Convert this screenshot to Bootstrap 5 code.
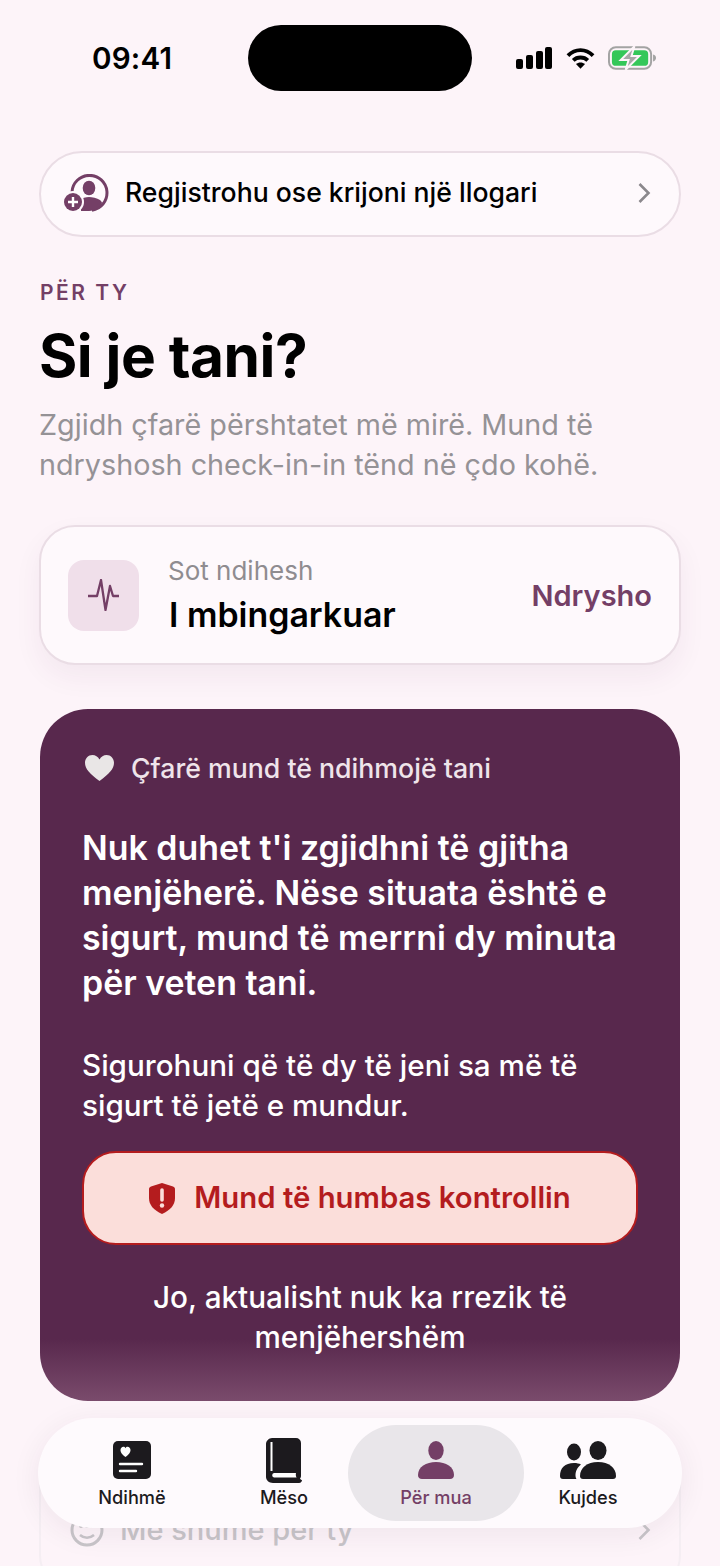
<!DOCTYPE html>
<html lang="en">
<head>
    <meta charset="UTF-8">
    <meta name="viewport" content="width=device-width, initial-scale=1.0">
    <title>Për mua</title>
    <link href="https://cdn.jsdelivr.net/npm/bootstrap@5.3.0/dist/css/bootstrap.min.css" rel="stylesheet">
    <style>
        html, body { height: 1566px; overflow: hidden; }
        body { background-color: #fdf4f9; font-family: Inter, "Liberation Sans", sans-serif; color: #000; position: relative; }
        .status-row { height: 91px; padding: 25px 63px 0 92px; }
        .clock { font-size: 29.6px; font-weight: 600; line-height: 66px; width: 156px; letter-spacing: .2px; }
        .island { width: 224px; height: 66px; background: #000; border-radius: 33px; }
        .status-icons { margin-left: auto; gap: 13.5px; height: 66px; }
        .page-body { padding: 60px 40px 0; }
        .signup-pill { height: 86px; margin: 0 -1px; border: 2px solid #eadde5; border-radius: 43px; background: #fef9fc; padding: 0 28px 2px 22px; }
        .signup-pill span { font-size: 26.6px; font-weight: 500; margin-left: 16px; }
        .eyebrow { font-size: 21px; font-weight: 600; letter-spacing: 2.5px; color: #743f66; margin-top: 43px; line-height: 26px; }
        .main-title { font-size: 58.6px; font-weight: 700; line-height: 70px; margin: 15px 0 0; letter-spacing: -.5px; margin-left: -1px; }
        .intro { font-size: 28.75px; line-height: 40px; color: #959296; margin: 14px 0 0 -1px; }
        .mood-card { height: 140px; margin: 40px -1px 0; border: 2px solid #eadde5; border-radius: 36px; background: #fef9fc; padding: 0 27px 0 27px; box-shadow: 0 12px 28px rgba(90, 40, 80, .06); }
        .mood-icon { width: 71px; height: 71px; border-radius: 16px; background: #f0dfea; margin-right: 29px; }
        .mood-text { padding-top: 2px; }
        .mood-small { font-size: 26px; line-height: 32px; color: #8f8c90; margin-top: -1px; }
        .mood-big { font-size: 33.9px; font-weight: 600; line-height: 42px; margin-top: 7px; padding-left: 1px; }
        .mood-link { font-size: 29px; font-weight: 600; color: #743f66; margin-left: auto; padding-top: 2px; }
        .help-card { height: 692px; margin-top: 44px; border-radius: 48px; padding: 42px 43px 0; color: #fff; background: linear-gradient(#58284d 0, #58284d 91%, #7a4b6c 100%); }
        .help-head { font-size: 26.7px; font-weight: 500; color: #efe4ea; gap: 17px; padding-left: 2px; line-height: 34px; }
        .help-lead { font-size: 33.9px; font-weight: 600; line-height: 45px; margin: 40px 0 0 -1px; }
        .help-sub { font-size: 29.65px; font-weight: 500; line-height: 40px; margin: 40px 0 0 -1px; }
        .danger-btn { width: 556px; height: 94px; margin: 26px 0 0 -1px; border: 2px solid #b41c1e; border-radius: 34px; background: #fbdeda; color: #b41c1e; font-size: 29.3px; font-weight: 600; gap: 19px; }
        .danger-btn:hover { background: #fbdeda; color: #b41c1e; border-color: #b41c1e; }
        .safe-link { font-size: 29.7px; font-weight: 500; line-height: 40px; text-align: center; margin-top: 32px; }
        .more-row { margin: 30px -1px 0; height: 160px; border: 2px solid #f5eef3; border-radius: 36px; padding: 78px 28px 0 29px; font-size: 29px; font-weight: 500; color: #c8c5c9; gap: 16px; align-items: flex-start; line-height: 38px; }
        .more-row svg { margin-top: 2px; }
        .tab-bar { position: absolute; left: 38px; top: 1418px; width: 644px; height: 110px; border-radius: 55px; background: #fefafd; box-shadow: 0 6px 30px rgba(60, 30, 50, .07); padding: 7px 18px; }
        .tab-item { width: 152px; height: 96px; border-radius: 48px; font-size: 18.2px; font-weight: 500; color: #1c1a1e; line-height: 22px; padding-top: 12px; flex: 0 0 auto; }
        .tab-icon { height: 46px; display: flex; align-items: center; justify-content: center; margin-bottom: 3px; }
        .tab-item.is-active { width: 176px; margin: 0 -12px; background: #e9e6ea; color: #743f66; }
    </style>
</head>
<body>

<!-- Status bar -->
<div class="status-row d-flex">
    <div class="clock">09:41</div>
    <div class="island"></div>
    <div class="status-icons d-flex align-items-center">
        <svg width="36" height="22" viewBox="0 0 36 22"><g fill="#000"><rect x="0" y="12" width="7" height="10" rx="2"/><rect x="10" y="8" width="7" height="14" rx="2"/><rect x="20" y="4" width="7" height="18" rx="2"/><rect x="29" y="0" width="7" height="22" rx="2"/></g></svg>
        <svg width="29" height="22" viewBox="0 0 30 22"><g fill="none" stroke="#000" stroke-width="4"><path d="M2 8.500C9.500 1 20.500 1 28 8.500"/><path d="M7.500 13.500c4-4 11-4 15 0"/></g><path d="M15 22l-4.700-4.700c2.600-2.300 6.800-2.300 9.400 0z" fill="#000"/></svg>
        <svg width="49" height="24" viewBox="0 0 50 24"><rect x="1" y="1" width="43" height="22" rx="7" fill="none" stroke="#a3a3a3" stroke-width="2"/><rect x="4" y="4" width="37" height="16" rx="4" fill="#34c759"/><path d="M46 8.500c2 .5 3 2 3 3.500s-1 3-3 3.500z" fill="#a3a3a3"/><path d="M27 0L13 14h8l-3 10 14-14h-8z" fill="#a8a8a8" stroke="#fdf4f9" stroke-width="2"/></svg>
    </div>
</div>

<div class="page-body">
    <!-- Sign up -->
    <div class="signup-pill d-flex align-items-center">
        <svg width="46" height="38" viewBox="0 0 46 38">
            <path d="M9 18a17.500 17.500 0 1 1 20 18.200" fill="none" stroke="#743f66" stroke-width="3"/>
            <ellipse cx="26" cy="14" rx="6.300" ry="7.300" fill="#743f66"/>
            <path d="M18 37c0-4 0-8-2-11 3-2 7-3 10-3s8 1 11 3c1 1 2 2 2 3-2 4-7 8-13 8z" fill="#743f66"/>
            <circle cx="10" cy="28" r="11" fill="#fef9fc"/>
            <circle cx="10" cy="28" r="9" fill="#743f66"/>
            <path d="M10 23v10M5 28h10" stroke="#fff" stroke-width="2.400"/>
        </svg>
        <span>Regjistrohu ose krijoni një llogari</span>
        <svg class="ms-auto" width="14" height="22" viewBox="0 0 14 22"><path d="M2.500 2l9 9-9 9" fill="none" stroke="#8b888c" stroke-width="2.600"/></svg>
    </div>

    <div class="eyebrow">PËR TY</div>
    <h1 class="main-title">Si je tani?</h1>
    <p class="intro">Zgjidh çfarë përshtatet më mirë. Mund të ndryshosh check-in-in tënd në çdo kohë.</p>

    <!-- Current mood -->
    <div class="mood-card d-flex align-items-center">
        <div class="mood-icon d-flex align-items-center justify-content-center">
            <svg width="32" height="32" viewBox="0 0 32 32"><path d="M0 17h9L13 1l4.500 30L22 7l3 10h6" fill="none" stroke="#743f66" stroke-width="2.300" stroke-linejoin="round"/></svg>
        </div>
        <div class="mood-text">
            <div class="mood-small">Sot ndihesh</div>
            <div class="mood-big">I mbingarkuar</div>
        </div>
        <div class="mood-link">Ndrysho</div>
    </div>

    <!-- Help card -->
    <div class="help-card">
        <div class="help-head d-flex align-items-center">
            <svg width="29" height="26" viewBox="0 0 29 26"><path d="M14.500 26C5 19 0 14 0 7.800 0 3.400 3.300 0 7.400 0c3 0 5.500 1.600 7.100 4.400C16.100 1.600 18.600 0 21.600 0 25.700 0 29 3.400 29 7.800 29 14 24 19 14.500 26z" fill="#e9e6e6"/></svg>
            <span>Çfarë mund të ndihmojë tani</span>
        </div>
        <p class="help-lead">Nuk duhet t'i zgjidhni të gjitha menjëherë. Nëse situata është e sigurt, mund të merrni dy minuta për veten tani.</p>
        <p class="help-sub">Sigurohuni që të dy të jeni sa më të sigurt të jetë e mundur.</p>
        <button type="button" class="btn danger-btn d-flex align-items-center justify-content-center">
            <svg width="26" height="31" viewBox="0 0 26 31"><path d="M13 0l11 3.500c1.200.4 2 1.500 2 2.800V15c0 7-4.500 12-13 16C4.500 27 0 22 0 15V6.300c0-1.300.8-2.400 2-2.800z" fill="#b41c1e"/><path d="M13 7v10" stroke="#fbdeda" stroke-width="3.600" stroke-linecap="round"/><circle cx="13" cy="22.500" r="2.200" fill="#fbdeda"/></svg>
            <span>Mund të humbas kontrollin</span>
        </button>
        <div class="safe-link">Jo, aktualisht nuk ka rrezik të menjëhershëm</div>
    </div>

    <!-- Partly hidden row under the tab bar -->
    <div class="more-row d-flex">
        <svg width="34" height="34" viewBox="0 0 34 34"><circle cx="17" cy="17" r="15" fill="none" stroke="#c8c5c9" stroke-width="3"/><g fill="#c8c5c9"><circle cx="11" cy="13" r="2"/><circle cx="17" cy="13" r="2"/><circle cx="23" cy="13" r="2"/></g><path d="M10 22c4 3.500 10 3.500 14 0" fill="none" stroke="#c8c5c9" stroke-width="2.500"/></svg>
        <span>Më shumë për ty</span>
        <svg class="ms-auto" width="14" height="30" viewBox="0 0 14 30"><path d="M2.500 8l9 9-9 9" fill="none" stroke="#c8c5c9" stroke-width="2.600"/></svg>
    </div>
</div>

<!-- Tab bar -->
<nav class="tab-bar d-flex">
    <div class="tab-item d-flex flex-column align-items-center">
        <div class="tab-icon">
            <svg width="38" height="38" viewBox="0 0 38 38"><rect width="38" height="38" rx="5" fill="#1c1a1e"/><path d="M12.500 16C8.500 13 7.500 11 7.500 9c0-1.900 1.400-3.200 2.900-3.200 1 0 1.600.5 2.100 1.400.5-.9 1.100-1.400 2.100-1.400 1.500 0 2.900 1.300 2.900 3.200 0 2-1 4-5 7z" fill="#fff"/><path d="M7 23h22M7 30h16" stroke="#fff" stroke-width="2.400" stroke-linecap="round"/></svg>
        </div>
        <span>Ndihmë</span>
    </div>
    <div class="tab-item d-flex flex-column align-items-center">
        <div class="tab-icon">
            <svg width="36" height="45" viewBox="0 0 36 45"><path d="M6 0h24a5 5 0 0 1 5 5v33c0 1-.5 2-1 2.500.7 1 1.500 1.500 2 1.500 0 1.500-1 3-3 3H7c-4 0-7-3-7-6V6c0-3 3-6 6-6z" fill="#1c1a1e"/><path d="M5.500 4v29" stroke="#fff" stroke-width="2"/><path d="M8 35h22c-.4 1.500-.2 3 .6 4.500H8a2.300 2.300 0 0 1 0-4.500z" fill="#fff"/></svg>
        </div>
        <span>Mëso</span>
    </div>
    <div class="tab-item is-active d-flex flex-column align-items-center">
        <div class="tab-icon">
            <svg width="36" height="38" viewBox="0 0 36 38"><ellipse cx="18" cy="9.500" rx="7.700" ry="9.500" fill="#743f66"/><path d="M0 34c0-8 8-13 18-13s18 5 18 13c0 2.500-1.500 4-4 4H4c-2.500 0-4-1.500-4-4z" fill="#743f66"/></svg>
        </div>
        <span>Për mua</span>
    </div>
    <div class="tab-item d-flex flex-column align-items-center">
        <div class="tab-icon">
            <svg width="56" height="38" viewBox="0 0 56 38"><ellipse cx="14" cy="11" rx="7" ry="8.500" fill="#1c1a1e"/><ellipse cx="38" cy="9.500" rx="8.500" ry="9.500" fill="#1c1a1e"/><path d="M0 35c0-8 5-13 14-13 3 0 5 .5 7 1.500-4 3-5.500 7-5.500 11 0 1 .3 2.500 1 3.500H3c-2 0-3-1-3-3z" fill="#1c1a1e"/><path d="M20 35c0-8 7-14 18-14s18 6 18 14c0 2-1 3-3 3H23c-2 0-3-1-3-3z" fill="#1c1a1e"/></svg>
        </div>
        <span>Kujdes</span>
    </div>
</nav>

<script src="https://cdn.jsdelivr.net/npm/bootstrap@5.3.0/dist/js/bootstrap.bundle.min.js"></script>
</body>
</html>
